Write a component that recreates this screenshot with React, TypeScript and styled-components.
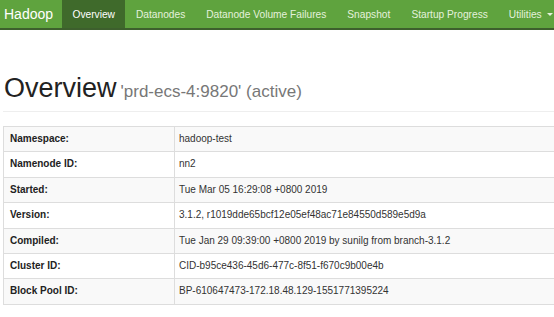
import React from "react";
import styled, { createGlobalStyle } from "styled-components";

const Global = createGlobalStyle`
  html, body { margin: 0; padding: 0; background: #fff; }
  body { font-family: "Liberation Sans", Arial, sans-serif; color: #333; overflow: hidden; }
`;

const Nav = styled.nav`
  display: flex;
  align-items: stretch;
  height: 28px;
  background: #5fa33e;
  border-bottom: 2px solid #3d5f2d;
  overflow: hidden;
`;

const Brand = styled.div`
  display: flex;
  align-items: center;
  flex-shrink: 0;
  box-sizing: border-box;
  padding: 0 0 0 4px;
  width: 62px;
  color: #fff;
  font-size: 14px;
`;

const NavItem = styled.div<{ $active?: boolean }>`
  display: flex;
  align-items: center;
  flex-shrink: 0;
  padding: 0 10.5px;
  font-size: 10.2px;
  color: ${(p) => (p.$active ? "#ffffff" : "#e4f1dc")};
  background: ${(p) => (p.$active ? "#3f6a2b" : "transparent")};
  white-space: nowrap;
`;

const Caret = styled.span`
  display: inline-block;
  margin-left: 5px;
  width: 0;
  height: 0;
  border-left: 3px solid transparent;
  border-right: 3px solid transparent;
  border-top: 3px solid #e4f1dc;
`;

const Main = styled.main`
  padding: 0 0 0 3px;
  width: 620px;
`;

const Header = styled.div`
  display: flex;
  align-items: baseline;
  gap: 4px;
  margin: 40px 0 0 0;
  padding: 0 0 5px 1px;
  border-bottom: 1px solid #eee;
`;

const Title = styled.h1`
  margin: 0;
  font-weight: 400;
  font-size: 27px;
  line-height: 36px;
  color: #222;
`;

const Sub = styled.small`
  font-size: 17px;
  color: #777;
`;

const Table = styled.table`
  margin-top: 14px;
  width: 100%;
  border-collapse: collapse;
  border: 1px solid #ddd;
  font-size: 10px;
`;

const Row = styled.tr<{ $odd: boolean }>`
  background: ${(p) => (p.$odd ? "#f9f9f9" : "#fff")};
`;

const Th = styled.th`
  text-align: left;
  font-weight: 700;
  width: 158px;
  padding: 5px 6px;
  line-height: 14.4px;
  border-top: 1px solid #ddd;
  border-right: 1px solid #ddd;
  color: #222;
`;

const Td = styled.td`
  padding: 5px 4px;
  line-height: 14.4px;
  border-top: 1px solid #ddd;
  color: #333;
  white-space: nowrap;
`;

const rows: [string, string][] = [
  ["Namespace:", "hadoop-test"],
  ["Namenode ID:", "nn2"],
  ["Started:", "Tue Mar 05 16:29:08 +0800 2019"],
  ["Version:", "3.1.2, r1019dde65bcf12e05ef48ac71e84550d589e5d9a"],
  ["Compiled:", "Tue Jan 29 09:39:00 +0800 2019 by sunilg from branch-3.1.2"],
  ["Cluster ID:", "CID-b95ce436-45d6-477c-8f51-f670c9b00e4b"],
  ["Block Pool ID:", "BP-610647473-172.18.48.129-1551771395224"],
];

export default function App() {
  return (
    <>
      <Global />
      <Nav>
        <Brand>Hadoop</Brand>
        <NavItem $active>Overview</NavItem>
        <NavItem>Datanodes</NavItem>
        <NavItem>Datanode Volume Failures</NavItem>
        <NavItem>Snapshot</NavItem>
        <NavItem>Startup Progress</NavItem>
        <NavItem>
          Utilities
          <Caret />
        </NavItem>
      </Nav>
      <Main>
        <Header>
          <Title>Overview</Title>
          <Sub>'prd-ecs-4:9820' (active)</Sub>
        </Header>
        <Table>
          <tbody>
            {rows.map(([k, v], i) => (
              <Row key={k} $odd={i % 2 === 0}>
                <Th>{k}</Th>
                <Td>{v}</Td>
              </Row>
            ))}
          </tbody>
        </Table>
      </Main>
    </>
  );
}
